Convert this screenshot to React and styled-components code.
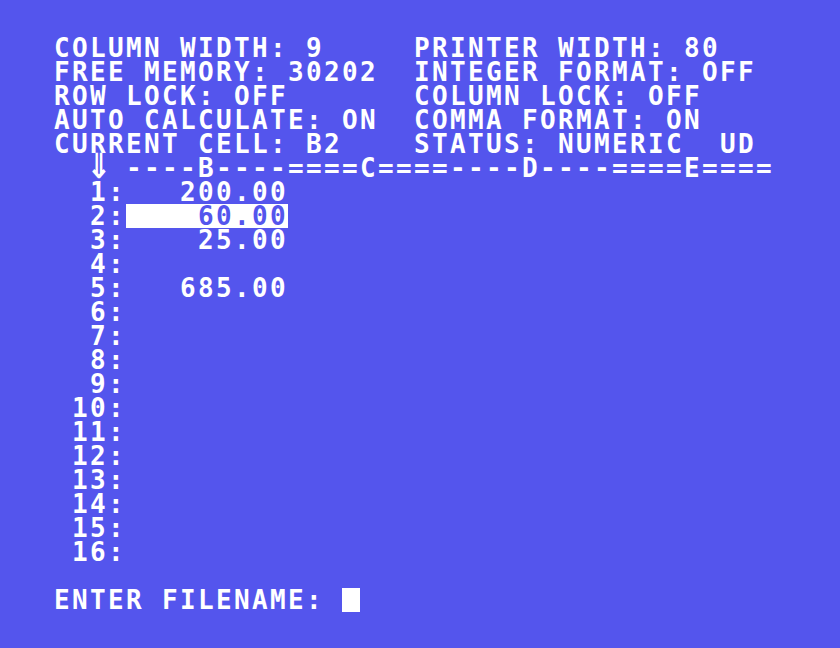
import React from "react";
import styled, { createGlobalStyle } from "styled-components";

const Global = createGlobalStyle`
  html, body { margin: 0; padding: 0; background: #5455ED; }
  body { width: 840px; height: 648px; overflow: hidden; }
`;

const Screen = styled.div`
  box-sizing: border-box;
  width: 840px;
  height: 648px;
  padding: 36px 0 0 54px;
  background: #5455ED;
  color: #ffffff;
  font-family: "DejaVu Sans Mono", "Liberation Mono", monospace;
  font-weight: bold;
  font-size: 26px;
  letter-spacing: 2.35px;
  display: flex;
  flex-direction: column;
`;

const Line = styled.div`
  display: flex;
  height: 24px;
  line-height: 24px;
  white-space: pre;
`;

const Chars = styled.span`
  display: block;
  width: ${(p) => p.$cols * 18}px;
  height: 24px;
  overflow: visible;
  background: ${(p) => (p.$active ? "#ffffff" : "transparent")};
  color: ${(p) => (p.$active ? "#5455ED" : "#ffffff")};
`;

const Arrow = styled.span`
  display: flex;
  justify-content: center;
  align-items: flex-start;
  width: 18px;
  height: 24px;
  margin-left: 36px;
  margin-right: 18px;
  font-family: "DejaVu Sans", "DejaVu Sans Mono", sans-serif;
  font-weight: bold;
  font-size: 30px;
  letter-spacing: 0;
  line-height: 22px;
  transform: scaleY(1.15);
  transform-origin: top center;
  margin-top: -2px;
`;

const Cursor = styled.span`
  display: block;
  width: 18px;
  height: 24px;
  background: #ffffff;
`;

const statusLines = [
  ["COLUMN WIDTH: 9", "PRINTER WIDTH: 80"],
  ["FREE MEMORY: 30202", "INTEGER FORMAT: OFF"],
  ["ROW LOCK: OFF", "COLUMN LOCK: OFF"],
  ["AUTO CALCULATE: ON", "COMMA FORMAT: ON"],
  ["CURRENT CELL: B2", "STATUS: NUMERIC  UD"],
];

const header = ["----B----", "====C====", "----D----", "====E===="];

const values = { 1: "200.00", 2: "60.00", 3: "25.00", 5: "685.00" };

export default function App() {
  const rows = Array.from({ length: 16 }, (_, i) => i + 1);
  return (
    <>
      <Global />
      <Screen>
        {statusLines.map(([a, b], i) => (
          <Line key={"s" + i}>
            <Chars $cols={20}>{a}</Chars>
            <Chars $cols={20}>{b}</Chars>
          </Line>
        ))}
        <Line>
          <Arrow>{"\u21D3"}</Arrow>
          {header.map((h, i) => (
            <Chars key={i} $cols={h.length}>
              {h}
            </Chars>
          ))}
        </Line>
        {rows.map((n) => (
          <Line key={n}>
            <Chars $cols={4}>{String(n).padStart(3) + ":"}</Chars>
            <Chars $cols={9} $active={n === 2}>
              {(values[n] || "").padStart(9)}
            </Chars>
          </Line>
        ))}
        <Line />
        <Line>
          <Chars $cols={16}>ENTER FILENAME: </Chars>
          <Cursor />
        </Line>
      </Screen>
    </>
  );
}
